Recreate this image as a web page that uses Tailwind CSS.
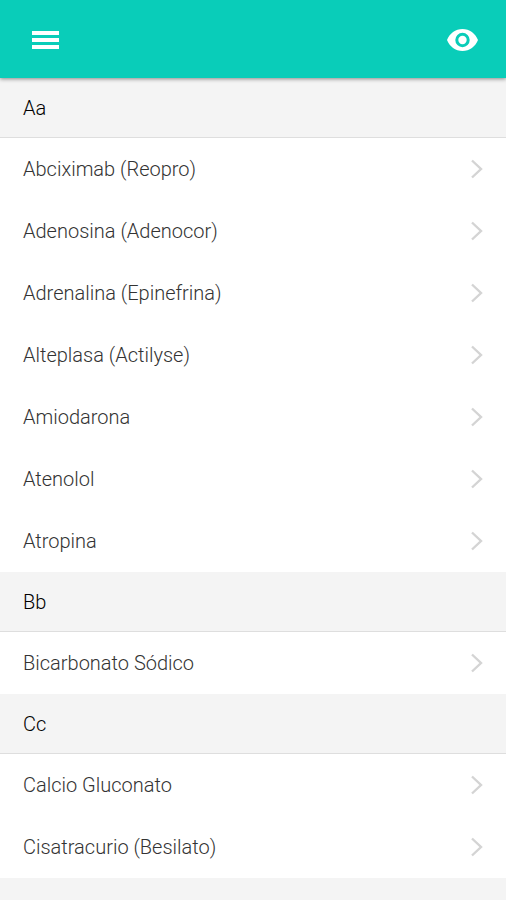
<!DOCTYPE html>
<html lang="pt-BR">
<head>
    <meta charset="UTF-8">
    <meta name="viewport" content="width=device-width, initial-scale=1.0">
    <title>Medicamentos</title>
    <script src="https://cdn.jsdelivr.net/npm/@tailwindcss/browser@4"></script>
</head>
<body class="antialiased bg-white font-['Roboto',sans-serif] text-xl leading-6 overflow-x-hidden h-screen overflow-y-hidden">

    <!-- Chevron usado em todas as linhas -->
    <svg class="hidden">
        <symbol id="chevron" viewBox="0 0 12 20">
            <path d="M1 1.500 10 10 1 18.500" fill="none" stroke="currentColor" stroke-width="2.400"/>
        </symbol>
    </svg>

    <!-- =========== HEADER =========== -->
    <header class="relative h-[78px] px-8 pt-px flex justify-between items-center bg-[#09cdb9] shadow-[0_1px_4px_rgba(0,0,0,0.45)]">
        <button type="button" aria-label="Menu" class="text-white">
            <svg class="w-[27px] h-[20px]" viewBox="0 0 27 20" fill="currentColor">
                <path d="M0 1h27v4H0zM0 8h27v4H0zM0 15h27v4H0z"/>
            </svg>
        </button>
        <button type="button" aria-label="Visualizar" class="-mr-1 text-white">
            <svg class="w-[31px] h-[22px]" viewBox="0 0 31 22" fill="currentColor" fill-rule="evenodd">
                <path d="M15.500 0C8.500 0 2.500 4.500 0 11c2.500 6.500 8.500 11 15.500 11S28.500 17.500 31 11C28.500 4.500 22.500 0 15.500 0zm0 18.200a7.200 7.200 0 1 1 0-14.400 7.200 7.200 0 0 1 0 14.400zm0-11.400a4.200 4.200 0 1 0 0 8.400 4.200 4.200 0 0 0 0-8.400z"/>
            </svg>
        </button>
    </header>

    <main>
        <!-- A -->
        <section>
            <h2 class="h-[60px] px-[23px] pt-px flex items-center bg-[#f4f4f4] border-b border-[#dedede] font-light text-black">Aa</h2>
            <ul class="font-light text-[#333]">
                <li><a href="#" class="h-[62px] px-[23px] flex items-center justify-between">Abciximab (Reopro)<svg class="w-3 h-5 text-[#d4d4d4]"><use href="#chevron"/></svg></a></li>
                <li><a href="#" class="h-[62px] px-[23px] flex items-center justify-between">Adenosina (Adenocor)<svg class="w-3 h-5 text-[#d4d4d4]"><use href="#chevron"/></svg></a></li>
                <li><a href="#" class="h-[62px] px-[23px] flex items-center justify-between">Adrenalina (Epinefrina)<svg class="w-3 h-5 text-[#d4d4d4]"><use href="#chevron"/></svg></a></li>
                <li><a href="#" class="h-[62px] px-[23px] flex items-center justify-between">Alteplasa (Actilyse)<svg class="w-3 h-5 text-[#d4d4d4]"><use href="#chevron"/></svg></a></li>
                <li><a href="#" class="h-[62px] px-[23px] flex items-center justify-between">Amiodarona<svg class="w-3 h-5 text-[#d4d4d4]"><use href="#chevron"/></svg></a></li>
                <li><a href="#" class="h-[62px] px-[23px] flex items-center justify-between">Atenolol<svg class="w-3 h-5 text-[#d4d4d4]"><use href="#chevron"/></svg></a></li>
                <li><a href="#" class="h-[62px] px-[23px] flex items-center justify-between">Atropina<svg class="w-3 h-5 text-[#d4d4d4]"><use href="#chevron"/></svg></a></li>
            </ul>
        </section>

        <!-- B -->
        <section>
            <h2 class="h-[60px] px-[23px] pt-px flex items-center bg-[#f4f4f4] border-b border-[#dedede] font-light text-black">Bb</h2>
            <ul class="font-light text-[#333]">
                <li><a href="#" class="h-[62px] px-[23px] flex items-center justify-between">Bicarbonato Sódico<svg class="w-3 h-5 text-[#d4d4d4]"><use href="#chevron"/></svg></a></li>
            </ul>
        </section>

        <!-- C -->
        <section>
            <h2 class="h-[60px] px-[23px] pt-px flex items-center bg-[#f4f4f4] border-b border-[#dedede] font-light text-black">Cc</h2>
            <ul class="font-light text-[#333]">
                <li><a href="#" class="h-[62px] px-[23px] flex items-center justify-between">Calcio Gluconato<svg class="w-3 h-5 text-[#d4d4d4]"><use href="#chevron"/></svg></a></li>
                <li><a href="#" class="h-[62px] px-[23px] flex items-center justify-between">Cisatracurio (Besilato)<svg class="w-3 h-5 text-[#d4d4d4]"><use href="#chevron"/></svg></a></li>
            </ul>
        </section>

        <!-- D -->
        <section>
            <h2 class="h-[60px] px-[23px] pt-px flex items-center bg-[#f4f4f4] border-b border-[#dedede] font-light text-black">Dd</h2>
        </section>
    </main>

</body>
</html>
